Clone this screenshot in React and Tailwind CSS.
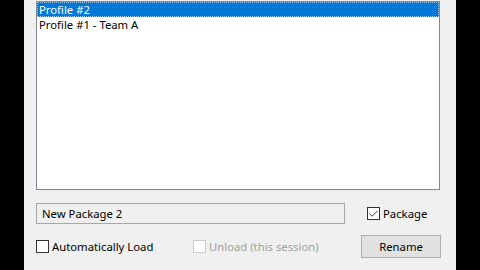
import { Check } from 'lucide-react';

const PROFILES = ['Profile #2', 'Profile #1 - Team A'];

function CheckBox({ checked, disabled, label }) {
  return (
    <label className={`flex items-center gap-[3px] ${disabled ? 'text-[#a0a0a0]' : 'text-black'}`}>
      <span
        className={`w-[13px] h-[13px] border flex items-center justify-center bg-white ${disabled ? 'border-[#cccccc]' : 'border-[#333333]'}`}
      >
        {checked && <Check className="w-[12px] h-[12px] text-[#222222]" strokeWidth={2} />}
      </span>
      <span className="leading-[15px]">{label}</span>
    </label>
  );
}

export default function App() {
  return (
    <div
      className="w-[480px] h-[270px] bg-black flex overflow-hidden text-[11.3px]"
      style={{ fontFamily: '"Noto Sans", "Open Sans", sans-serif' }}
    >
      <div className="w-[24px] shrink-0" />
      <div className="w-[432px] shrink-0 bg-[#f0f0f0] pl-[12px] pr-[16px] pt-[1px] flex flex-col">
        {/* list */}
        <div className="h-[189px] border border-[#828790] bg-white">
          {PROFILES.map((p, i) => (
            <div
              key={p}
              className={`h-[15px] leading-[15px] pl-[2px] ${i === 0 ? 'bg-[#0078d7] text-white outline outline-1 outline-dotted outline-[#99c9ef] -outline-offset-1' : 'text-black'}`}
            >
              {p}
            </div>
          ))}
        </div>

        {/* name row */}
        <div className="mt-[13px] flex items-center">
          <div className="w-[309px] h-[21px] border border-[#a8a8a8] bg-[#f0f0f0] pl-[5px] leading-[19px] text-black">
            New Package 2
          </div>
          <div className="ml-[22px]">
            <CheckBox checked label="Package" />
          </div>
        </div>

        {/* options row */}
        <div className="mt-[11px] flex items-center">
          <div className="w-[157px]">
            <CheckBox label="Automatically Load" />
          </div>
          <CheckBox disabled label="Unload (this session)" />
          <button className="ml-auto mr-[-1px] w-[80px] h-[23px] bg-[#e1e1e1] border border-[#adadad] text-black leading-[21px]">
            Rename
          </button>
        </div>
      </div>
    </div>
  );
}
